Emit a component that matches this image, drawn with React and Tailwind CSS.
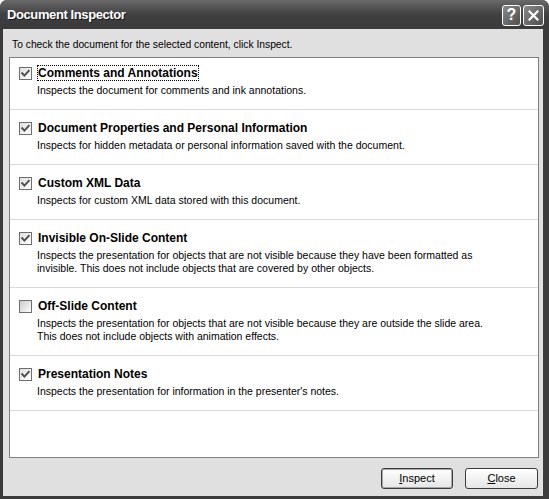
import React from "react";

const FONT = { fontFamily: '"Liberation Sans", Arial, sans-serif' };

function Check({ checked }) {
  return (
    <svg width="13" height="13" viewBox="0 0 13 13" className="shrink-0">
      <defs>
        <linearGradient id={checked ? "gc" : "gu"} x1="0" y1="0" x2="1" y2="1">
          <stop offset="0" stopColor={checked ? "#dedede" : "#c9c9c9"} />
          <stop offset="1" stopColor="#ffffff" />
        </linearGradient>
      </defs>
      <rect x="0.5" y="0.5" width="12" height="12" fill={`url(#${checked ? "gc" : "gu"})`} stroke="#6e6e6e" />
      {checked && (
        <polyline points="3.2,6.2 5.4,8.6 9.8,3.8" fill="none" stroke="#4d4d4d" strokeWidth="1.9" strokeLinecap="square" />
      )}
    </svg>
  );
}

const items = [
  { t: "Comments and Annotations", d: ["Inspects the document for comments and ink annotations."], c: true, focus: true },
  { t: "Document Properties and Personal Information", d: ["Inspects for hidden metadata or personal information saved with the document."], c: true },
  { t: "Custom XML Data", d: ["Inspects for custom XML data stored with this document."], c: true },
  {
    t: "Invisible On-Slide Content",
    d: [
      "Inspects the presentation for objects that are not visible because they have been formatted as",
      "invisible. This does not include objects that are covered by other objects.",
    ],
    c: true,
  },
  {
    t: "Off-Slide Content",
    d: [
      "Inspects the presentation for objects that are not visible because they are outside the slide area.",
      "This does not include objects with animation effects.",
    ],
    c: false,
  },
  { t: "Presentation Notes", d: ["Inspects the presentation for information in the presenter's notes."], c: true },
];

export default function App() {
  return (
    <div className="w-[549px] h-[499px] bg-white" style={FONT}>
      <div className="w-full h-full flex flex-col rounded-t-[7px] overflow-hidden bg-[#3b3b3b]">
        {/* Title bar */}
        <div className="h-[29px] shrink-0 flex items-center pl-[7px] pr-[5px] bg-gradient-to-b from-[#6a6a6a] via-[#404040] to-[#3a3a3a]">
          <span
            className="text-white font-bold text-[13px] tracking-[-0.4px] flex-1"
            style={{ textShadow: "1px 1px 0 #1a1a1a" }}
          >
            Document Inspector
          </span>
          <div className="flex gap-[2px] pt-[1px]">
            <div className="w-[19px] h-[21px] rounded-[3px] border border-white bg-gradient-to-br from-[#8a8a8a] to-[#4e4e4e] flex items-center justify-center text-white font-bold text-[16px] leading-none">
              ?
            </div>
            <div className="w-[21px] h-[21px] rounded-[3px] border border-white bg-gradient-to-br from-[#8a8a8a] to-[#4e4e4e] flex items-center justify-center">
              <svg width="11" height="11" viewBox="0 0 11 11">
                <path d="M1.5 1.5 L9.5 9.5 M9.5 1.5 L1.5 9.5" stroke="#ffffff" strokeWidth="2.2" strokeLinecap="square" />
              </svg>
            </div>
          </div>
        </div>

        {/* Body */}
        <div className="flex-1 ml-[3px] mr-[6px] mb-[3px] bg-[#e0e0e0] flex flex-col">
          <div className="pt-[9px] pl-[9px] text-[10.3px] leading-[13px] text-black">
            To check the document for the selected content, click Inspect.
          </div>
          <div className="mt-[6px] ml-[6px] mr-[4px] h-[401px] bg-white border border-[#7f7f7f] flex flex-col">
            {items.map((it, i) => (
              <div
                key={i}
                className={`flex border-b border-[#dadada] pl-[9px] pb-[12px] ${i === 0 ? "pt-[8px]" : "pt-[11px]"}`}
              >
                <div className="h-[14px] flex items-center">
                  <Check checked={it.c} />
                </div>
                <div className="ml-[5px] flex flex-col">
                  <div className="h-[14px] flex items-center pl-[1px]">
                    <span
                      className={`font-bold text-[12px] leading-[14px] text-black ${
                        it.focus ? "[outline:1px_dotted_#000] outline-offset-[0px]" : ""
                      }`}
                    >
                      {it.t}
                    </span>
                  </div>
                  <div className="mt-[4px] text-[10.5px] leading-[13px] text-black">
                    {it.d.map((l, j) => (
                      <div key={j}>{l}</div>
                    ))}
                  </div>
                </div>
              </div>
            ))}
          </div>
          <div className="mt-[10px] mr-[5px] flex justify-end gap-[12px]">
            <button className="w-[72px] h-[21px] rounded-[3px] border border-[#3c3c3c] bg-gradient-to-b from-white to-[#e6e6e6] shadow-[inset_0_0_0_1px_#a8a8a8] text-[11px] text-black flex items-center justify-center">
              <span>
                <span className="underline">I</span>nspect
              </span>
            </button>
            <button className="w-[73px] h-[21px] rounded-[3px] border border-[#3c3c3c] bg-gradient-to-b from-white to-[#e6e6e6] text-[11px] text-black flex items-center justify-center">
              <span>
                <span className="underline">C</span>lose
              </span>
            </button>
          </div>
        </div>
      </div>
    </div>
  );
}
